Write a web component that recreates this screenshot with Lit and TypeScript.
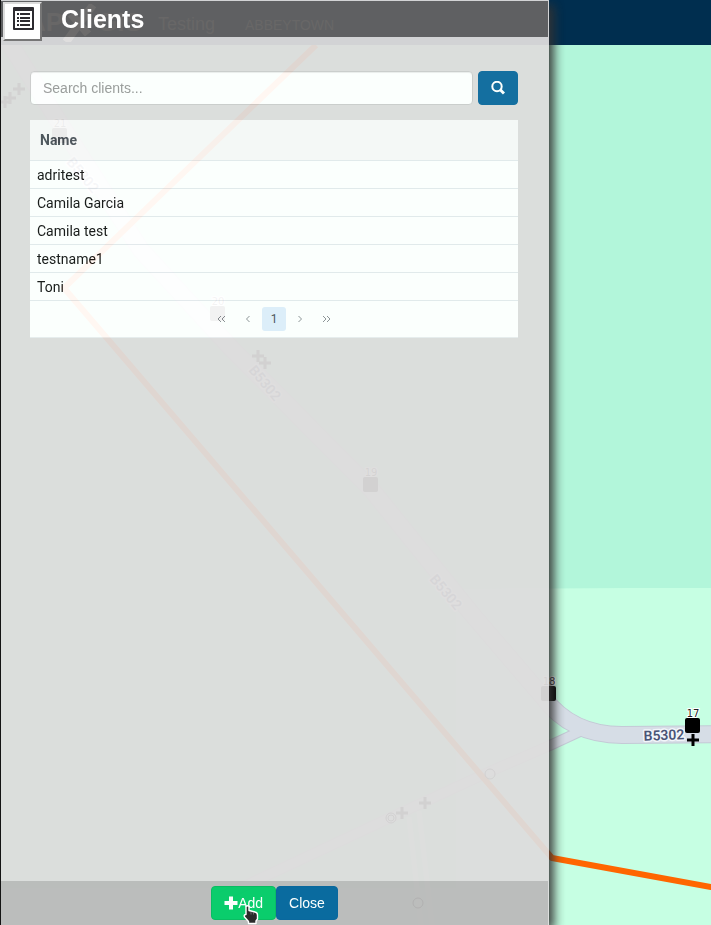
import { LitElement, html, css, svg } from "lit";
import { customElement, property, state } from "lit/decorators.js";

@customElement("map-view")
class MapView extends LitElement {
  static styles = css`
    :host { display: block; min-height: 0; overflow: hidden; background: #b2f6da; }
    .map { display: block; width: 100%; height: 100%; }
    .meadow { fill: #c6ffe3; }
    .casing { fill: none; stroke: #c4cad6; }
    .road { fill: none; stroke: #d6dde6; }
    .track { fill: none; stroke: #d2f6e6; stroke-width: 5; }
    .route { fill: none; stroke: #ff6600; stroke-width: 6; stroke-linejoin: round; }
    .main-casing { stroke-width: 18; }
    .main { stroke-width: 16; }
    .side-casing { stroke-width: 11; }
    .side { stroke-width: 9; }
    .label {
      font: 600 14px Roboto, sans-serif; fill: #4a5577; text-anchor: middle;
      stroke: #f2f5fa; stroke-width: 3; paint-order: stroke; stroke-linejoin: round;
    }
    .num {
      font: 10px "DejaVu Sans", sans-serif; fill: #222; text-anchor: middle;
      stroke: #fff; stroke-width: 2; paint-order: stroke;
    }
    .cross { stroke: #000; stroke-width: 3; fill: none; }
    .ring { stroke: #000; stroke-width: 1; fill: none; }
  `;

  private stops: [number, number, string][] = [
    [58, 90, "21"], [216, 268, "20"], [369, 439, "19"], [547, 648, "18"], [691, 680, "17"],
  ];
  private crosses: [number, number][] = [
    [18, 44], [9, 53], [4, 57], [257, 311], [264, 318], [401, 768], [424, 758], [692, 695],
  ];
  private labels: [number, number, number][] = [
    [82, 130, 50], [264, 338, 50], [445, 547, 50], [663, 690, -2],
  ];

  render() {
    const main = "M0 -15L60 80L140 205L230 303L370 444L470 568L542 652Q570 690 621 690L2000 680";
    const side = "M220 852L395 770L490 726L550 700L580 686";
    return html`<svg class="map" role="img" aria-label="Map">
      <path class="meadow" d="M455 544L630 543L2000 541V3000H0V843H455Z" />
      <path class="track" d="M408 772L420 880M418 766L431 880" />
      <path class="casing side-casing" d=${side} />
      <path class="casing main-casing" d=${main} />
      <path class="road side" d=${side} />
      <path class="road main" d=${main} />
      <path class="route" d="M315 0L63 243L551 813L710 842L2000 1085" />
      ${this.labels.map(([x, y, r]) => svg`<text class="label" transform="translate(${x} ${y}) rotate(${r})" dy="5">B5302</text>`)}
      ${this.stops.map(([x, y, n]) => svg`
        <rect x=${x - 7} y=${y - 7} width="15" height="15" rx="2" />
        <text class="num" x=${x + 1} y=${y - 8}>${n}</text>`)}
      ${this.crosses.map(([x, y]) => svg`<path class="cross" d="M${x - 6} ${y}h12M${x} ${y - 6}v12" />`)}
      <circle class="ring" cx="489" cy="729" r="5" />
      <circle class="ring" cx="390" cy="773" r="5" />
      <circle class="ring" cx="390" cy="773" r="3" />
      <circle class="ring" cx="417" cy="858" r="5" />
    </svg>`;
  }
}

@customElement("client-panel")
class ClientPanel extends LitElement {
  @property({ attribute: false }) clients: string[] = [];
  @state() private query = "";

  static styles = css`
    :host {
      display: flex; flex-direction: column; box-sizing: border-box;
      border: solid #dedddd; border-width: 1px 1px 0 0;
      background: #dedddd; opacity: 0.95;
      box-shadow: 5px 5px 10px #333;
      font: 14px/20px "Liberation Sans", Arial, sans-serif; color: #333;
    }
    button, input { font: inherit; box-sizing: border-box; margin: 0; }
    .head { height: 36px; background: #656464; }
    .body { flex: 1; padding: 34px 30px 30px 29px; }
    .search { display: flex; gap: 5px; margin-bottom: 15px; }
    .query {
      flex: 1; min-width: 0; height: 34px; padding: 6px 12px; border: 1px solid #ccc; border-radius: 4px;
      background: #fff; box-shadow: inset 0 1px 1px rgba(0, 0, 0, 0.075); color: #555;
    }
    .query::placeholder { color: #999; opacity: 1; }
    .btn {
      height: 34px; padding: 6px 12px; border: 1px solid #00609a; border-radius: 4px;
      background: #00649b; color: #fff; display: flex; align-items: center; justify-content: center;
    }
    .find { width: 40px; background: #0c689d; border-color: #0c689d; }
    .add { background: #00cb66; border-color: #00ba5c; }
    .grid { background: #fff; font-family: Roboto, sans-serif; border-bottom: 1px solid #e9ecef; }
    .table { width: 100%; border-collapse: collapse; }
    .table th {
      height: 40px; padding: 0 10px; text-align: left; font-weight: bold; color: #495057;
      background: #f8f8f8; border-bottom: 1px solid #e4e9ec;
    }
    .table td { height: 27px; padding: 0 7px; color: #111; border-bottom: 1px solid #e4e9ec; }
    .pages { display: flex; justify-content: center; align-items: center; gap: 2px; height: 36px; }
    .page {
      width: 24px; height: 24px; padding: 0; border: 0; border-radius: 3px; background: none;
      font-size: 12px; color: #495057; display: flex; align-items: center; justify-content: center;
    }
    .current { background: #dfeefb; }
    .arrow { fill: none; stroke: #8c9094; stroke-width: 1; }
    .foot { display: flex; justify-content: center; padding: 5px; background: #bbbaba; }
  `;

  private arrow(label: string, d: string) {
    return html`<button class="page" type="button" aria-label=${label}>
      <svg class="arrow" width="10" height="8" viewBox="0 0 10 8"><path d=${d} /></svg>
    </button>`;
  }

  private onInput(e: Event) {
    this.query = (e.target as HTMLInputElement).value;
  }

  render() {
    const q = this.query.toLowerCase();
    const rows = this.clients.filter((c) => c.toLowerCase().includes(q));
    return html`
      <div class="head"></div>
      <main class="body">
        <form class="search" @submit=${(e: Event) => e.preventDefault()}>
          <input class="query" type="text" aria-label="Search clients" placeholder="Search clients..." .value=${this.query} @input=${this.onInput} />
          <button class="btn find" aria-label="Search">
            <svg width="14" height="14" viewBox="0 0 14 14" fill="none" stroke="#fff">
              <circle cx="6" cy="5.500" r="4.700" stroke-width="2" />
              <path d="M9 8.500l4 4" stroke-width="3" />
            </svg>
          </button>
        </form>
        <div class="grid">
          <table class="table">
            <thead><tr><th scope="col">Name</th></tr></thead>
            <tbody>${rows.map((c) => html`<tr><td>${c}</td></tr>`)}</tbody>
          </table>
          <nav class="pages" aria-label="Pages">
            ${this.arrow("First page", "M4 1l-3 3l3 3M8 1l-3 3l3 3")}
            ${this.arrow("Previous page", "M6.5 1l-3 3l3 3")}
            <button class="page current" type="button" aria-current="page">1</button>
            ${this.arrow("Next page", "M3.5 1l3 3l-3 3")}
            ${this.arrow("Last page", "M2 1l3 3l-3 3M6 1l3 3l-3 3")}
          </nav>
        </div>
      </main>
      <footer class="foot">
        <button class="btn add" type="button">
          <svg width="14" height="14" viewBox="0 0 14 14"><path fill="#fff" d="M5 .5h4v4.500h4.500v4H9v4.500H5V9H.5V5H5z" /></svg>Add
        </button>
        <button class="btn" type="button">Close</button>
      </footer>`;
  }
}

@customElement("app-root")
class AppRoot extends LitElement {
  static styles = css`
    :host { display: grid; position: relative; min-height: 100vh; background: #111; overflow: hidden; padding-left: 1px; box-sizing: border-box; font-family: "Liberation Sans", Arial, sans-serif; }
    .backdrop { grid-area: 1 / 1; display: grid; grid-template-rows: 45px 1fr; min-height: 0; contain: size; }
    .bar { display: flex; align-items: center; background: #002e4f; color: #a8a8a8; padding-left: 26px; white-space: nowrap; }
    .logo { font-size: 26px; font-weight: bold; display: flex; align-items: center; }
    .slash { display: block; fill: none; stroke: #fff; stroke-width: 8; }
    .project { margin-left: 16px; padding-top: 4px; font-size: 18px; }
    .place { margin-left: 30px; padding-top: 4px; font-size: 14px; }
    .panel { grid-area: 1 / 1; margin-right: 162px; z-index: 1; }
    .heading { grid-area: 1 / 1; align-self: start; justify-self: start; z-index: 2; display: flex; padding: 2px; }
    .menu {
      flex: none; width: 39px; height: 39px; margin: 0; padding: 3px 0 0 1px; background: #fff;
      border: 2px solid; border-color: #ddd #767676 #767676 #ddd; box-sizing: border-box;
      display: flex; align-items: flex-start; justify-content: center;
    }
    .title { margin: 0 0 0 19px; font-size: 25px; line-height: 34px; font-weight: bold; color: #fff; }
    .pointer { position: absolute; left: 243px; bottom: 0; z-index: 2; }
  `;

  private clients = ["adritest", "Camila Garcia", "Camila test", "testname1", "Toni"];

  render() {
    return html`
      <div class="backdrop">
        <div class="bar">
          <span class="logo">AP<svg class="slash" width="34" height="38" viewBox="0 0 34 38"><path d="M3 38L30 1M8 10l17 20" /></svg>GIS</span>
          <span class="project">Testing</span>
          <span class="place">ABBEYTOWN</span>
        </div>
        <map-view></map-view>
      </div>
      <client-panel class="panel" .clients=${this.clients}></client-panel>
      <header class="heading">
        <button class="menu" type="button" aria-label="List">
          <svg width="21" height="23" viewBox="0 0 21 23">
            <rect width="21" height="23" rx="1" fill="#2d2b30" />
            <path fill="#fff" d="M2 4h17v17H2z" />
            <path fill="#2d2b30" d="M4 6h2v2H4zM4 10h2v2H4zM4 13h2v2H4zM4 17h2v2H4zM7 6h10v2H7zM7 10h10v2H7zM7 13h10v2H7zM7 17h10v2H7z" />
          </svg>
        </button>
        <h1 class="title">Clients</h1>
      </header>
      <svg class="pointer" width="17" height="20" viewBox="0 0 17 20" aria-hidden="true">
        <path d="M3 1.500Q4.500 0 6 1.500V5.500L12 7Q14.500 7.500 14.500 10V14L13 16V18.500H5.500V16.500L1.500 12Q.5 9.500 3 9.500Z" fill="#2b2b2b" stroke="#fff" stroke-width="1.400" stroke-linejoin="round" />
        <path d="M8 6.500v3M10.500 7v2.500" stroke="#999" stroke-width=".6" />
      </svg>`;
  }
}
